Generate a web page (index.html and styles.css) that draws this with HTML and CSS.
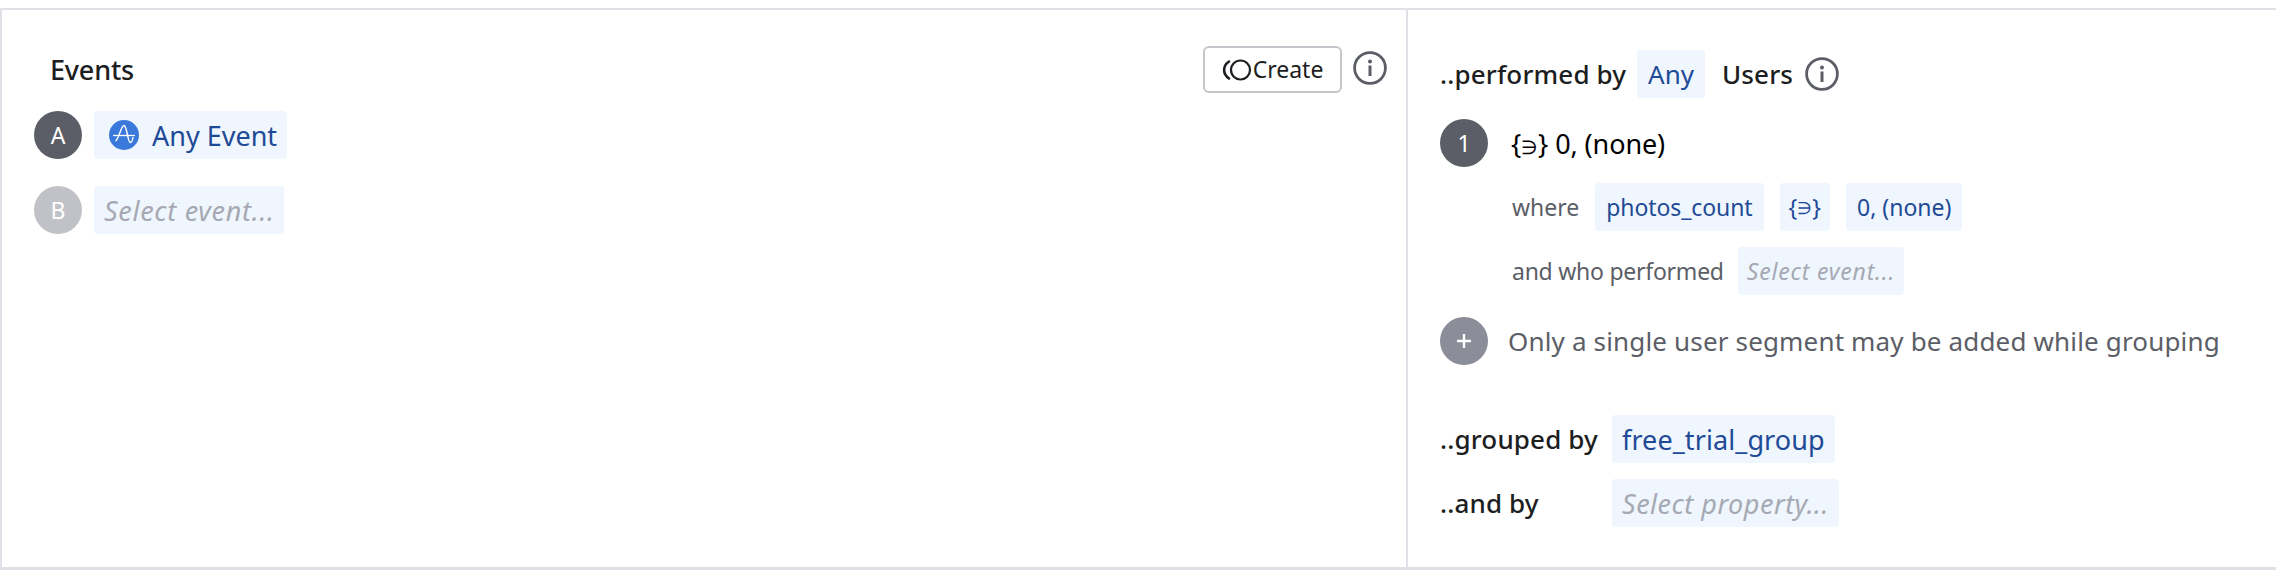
FILE: index.html
```html
<!DOCTYPE html>
<html lang="en">
<head>
<meta charset="utf-8">
<title>Events segmentation</title>
<link rel="stylesheet" href="styles.css">
</head>
<body>
<main class="panel">
  <section class="events">
    <header class="events-head">
      <h2 class="events-title">Events</h2>
      <div class="events-actions">
        <button class="create-btn" type="button">
          <svg class="create-icon" viewBox="0 0 30 24" width="30" height="24" aria-hidden="true">
            <circle cx="18.5" cy="12" r="9.5" fill="none" stroke="#1c1e21" stroke-width="2.2"/>
            <path d="M7 3.5 C0.5 8 0.5 16 7 20.5" fill="none" stroke="#1c1e21" stroke-width="2.6" stroke-linecap="round"/>
          </svg>
          <span>Create</span>
        </button>
        <svg class="info" viewBox="0 0 34 34" width="34" height="34" aria-hidden="true">
          <circle cx="17" cy="17" r="15.4" fill="none" stroke="#5b5e66" stroke-width="2.8"/>
          <circle cx="17" cy="10.5" r="2" fill="#5b5e66"/>
          <rect x="15.5" y="14.5" width="3" height="10.5" fill="#5b5e66"/>
        </svg>
      </div>
    </header>
    <div class="event-row">
      <span class="badge badge-dark">A</span>
      <span class="pill pill-event">
        <svg class="amp" viewBox="0 0 30 30" width="30" height="30" aria-hidden="true">
          <circle cx="15" cy="15" r="15" fill="#3a78db"/>
          <path d="M4 15.5 H26" stroke="#fff" stroke-width="1.3" fill="none"/>
          <path d="M6.5 21 C10 19 12 5.5 15 5.5 C18 5.5 18.5 22.5 21.5 22.5 C23 22.5 23.6 20 24 17" stroke="#fff" stroke-width="1.4" fill="none"/>
        </svg>
        <span>Any Event</span>
      </span>
    </div>
    <div class="event-row event-row-next">
      <span class="badge badge-light">B</span>
      <span class="pill placeholder pill-select-event">Select event...</span>
    </div>
  </section>

  <section class="filters">
    <div class="row title-row">
      <span class="label">..performed by</span>
      <span class="pill pill-any">Any</span>
      <span class="label users">Users</span>
      <svg class="info info-users" viewBox="0 0 34 34" width="34" height="34" aria-hidden="true">
        <circle cx="17" cy="17" r="15.4" fill="none" stroke="#5b5e66" stroke-width="2.8"/>
        <circle cx="17" cy="10.5" r="2" fill="#5b5e66"/>
        <rect x="15.5" y="14.5" width="3" height="10.5" fill="#5b5e66"/>
      </svg>
    </div>
    <div class="row segment-row">
      <span class="badge badge-dark">1</span>
      <span class="segment-name">{<span class="contains">∋</span>} 0, (none)</span>
    </div>
    <div class="row clause where-row">
      <span class="clause-label">where</span>
      <span class="pill pill-small pill-property-name">photos_count</span>
      <span class="pill pill-small pill-operator">{<span class="contains">∋</span>}</span>
      <span class="pill pill-small">0, (none)</span>
    </div>
    <div class="row clause who-row">
      <span class="clause-label clause-label-long">and who performed</span>
      <span class="pill pill-small placeholder placeholder-small">Select event...</span>
    </div>
    <div class="row add-row">
      <span class="badge badge-add">
        <svg viewBox="0 0 16 16" width="16" height="16" aria-hidden="true">
          <path d="M8 1 V15 M1 8 H15" stroke="#fff" stroke-width="2.4" fill="none"/>
        </svg>
      </span>
      <span class="add-note">Only a single user segment may be added while grouping</span>
    </div>
    <div class="row group-row group-first">
      <span class="label group-label">..grouped by</span>
      <span class="pill pill-group">free_trial_group</span>
    </div>
    <div class="row group-row group-next">
      <span class="label group-label">..and by</span>
      <span class="pill placeholder pill-property">Select property...</span>
    </div>
  </section>
</main>
</body>
</html>
```

FILE: styles.css
```css
* { box-sizing: border-box; }
html, body { margin: 0; padding: 0; background: #fff; }
body {
  width: 2276px;
  height: 570px;
  overflow: hidden;
  padding-top: 8px;
  font-family: "Noto Sans", "Liberation Sans", sans-serif;
  color: #1c1e21;
}
.panel {
  display: flex;
  height: 562px;
  border-top: 2px solid #e0e0e6;
  border-left: 2px solid #e0e0e6;
  border-bottom: 3px solid #e0e0e6;
}
.events {
  width: 1406px;
  border-right: 2px solid #e0e0e6;
  padding: 36px 19px 0 32px;
}
.events-head {
  display: flex;
  justify-content: space-between;
  align-items: center;
  height: 47px;
  padding-left: 16px;
}
.events-title {
  margin: 0;
  font-size: 27px;
  font-weight: 500;
  line-height: 48px;
  letter-spacing: -0.2px;
}
.events-actions { display: flex; align-items: center; gap: 11px; }
.events-actions .info { margin-top: -3px; }
.create-btn {
  display: flex;
  align-items: center;
  justify-content: center;
  gap: 1px;
  width: 139px;
  height: 47px;
  padding: 0;
  background: #fff;
  border: 2px solid #c5c6cc;
  border-radius: 6px;
  color: #1c1e21;
  font: 400 23px/1 "Noto Sans", sans-serif;
}
.create-icon { flex: none; }
.event-row {
  display: flex;
  align-items: center;
  gap: 12px;
  margin-top: 18px;
}
.event-row-next { margin-top: 27px; }
.badge {
  flex: none;
  display: flex;
  align-items: center;
  justify-content: center;
  width: 48px;
  height: 48px;
  border-radius: 50%;
  color: #fff;
  font-size: 23px;
}
.badge-dark { background: #5b5e66; }
.badge-light { background: #c1c2c7; }
.badge-add { background: #8b8d98; }
.pill {
  display: inline-flex;
  align-items: center;
  height: 48px;
  padding: 0 10px;
  border-radius: 4px;
  background: #eff6fe;
  color: #1f4a96;
  font-size: 26px;
  white-space: nowrap;
}
.pill-event { gap: 13px; padding: 0 10px 0 15px; font-size: 27px; }
.pill-select-event { font-size: 27px; letter-spacing: 0.7px; padding: 0 9px 0 10px; }
.placeholder { color: #a6a9b3; font-style: italic; }
.contains { font-size: 0.72em; }
.filters {
  flex: 1;
  padding: 40px 0 0 32px;
  min-width: 0;
}
.row { display: flex; align-items: center; height: 48px; }
.label {
  font-size: 26px;
  font-weight: 500;
  letter-spacing: 0.15px;
  color: #1c1e21;
  white-space: nowrap;
}
.title-row .label:first-child { width: 197px; }
.pill-any { justify-content: center; width: 68px; padding: 0; }
.users { margin-left: 17px; }
.info-users { margin-left: 12px; }
.segment-row { margin-top: 21px; gap: 23px; }
.segment-name { font-size: 27px; letter-spacing: -0.1px; color: #000; }
.clause { margin-top: 16px; padding-left: 72px; }
.clause-label { font-size: 23px; color: #5b5e66; white-space: nowrap; }
.clause-label-long { letter-spacing: -0.25px; }
.where-row { gap: 16px; }
.who-row { gap: 14px; }
.pill-small { font-size: 23px; padding: 0 11px; }
.pill-property-name { letter-spacing: -0.1px; }
.pill-operator { padding: 0 9px; }
.placeholder-small { font-size: 23px; padding: 0 9px; letter-spacing: 0.8px; }
.add-row { margin-top: 22px; gap: 20px; }
.add-note { font-size: 26px; letter-spacing: 0.16px; color: #5b5e66; white-space: nowrap; }
.group-first { margin-top: 50px; }
.group-next { margin-top: 16px; }
.group-label { width: 172px; }
.pill-group { font-size: 27px; letter-spacing: 0.1px; }
.pill-property { font-size: 27px; letter-spacing: 0.5px; }
```
